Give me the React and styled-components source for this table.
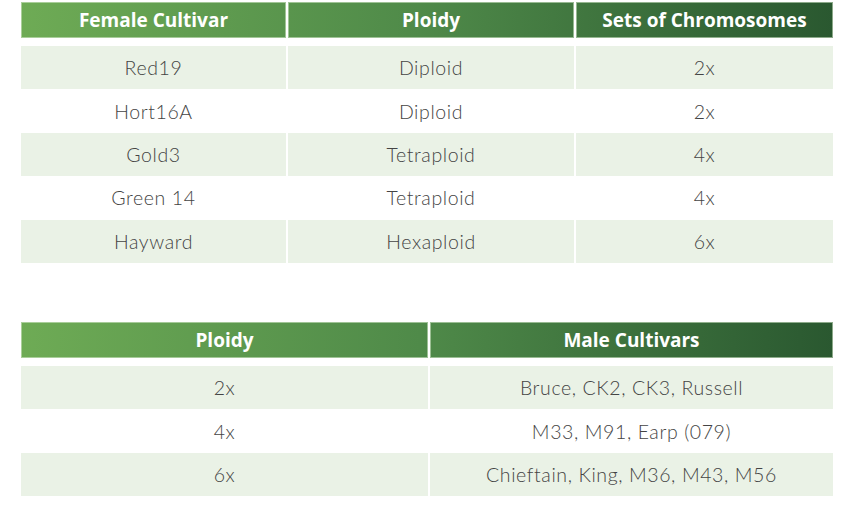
import React from "react";
import styled, { createGlobalStyle } from "styled-components";

const GlobalStyle = createGlobalStyle`
    body {
        margin: 0;
        background: #ffffff;
    }
`;

const Page = styled.div`
    padding: 2px 11px 0 21px;
    display: flex;
    flex-direction: column;
    gap: 59px;
`;

const Grid = styled.div`
    display: grid;
    grid-template-columns: ${(p) => p.$cols};
    column-gap: 2px;
    width: 812px;
`;

const HeadCell = styled.div`
    height: 36px;
    margin-bottom: 8px;
    display: flex;
    align-items: center;
    justify-content: center;
    box-sizing: border-box;
    border: 1px solid rgba(220, 236, 212, 0.55);
    background: linear-gradient(90deg, #6eab55 21px, #4f8a49 420px, #2a5830 833px);
    background-attachment: fixed;
    color: #ffffff;
    font-family: "Open Sans", "Liberation Sans", sans-serif;
    font-weight: 700;
    font-size: 19px;
`;

const Cell = styled.div`
    height: 43.4px;
    display: flex;
    align-items: center;
    justify-content: center;
    background: ${(p) => (p.$shade ? "#eaf2e6" : "#ffffff")};
    color: #444444;
    font-family: Lato, Inter, sans-serif;
    font-weight: 300;
    font-size: 19.5px;
    letter-spacing: 0.6px;
`;

const femaleRows = [
    ["Red19", "Diploid", "2x"],
    ["Hort16A", "Diploid", "2x"],
    ["Gold3", "Tetraploid", "4x"],
    ["Green 14", "Tetraploid", "4x"],
    ["Hayward", "Hexaploid", "6x"],
];

const maleRows = [
    ["2x", "Bruce, CK2, CK3, Russell"],
    ["4x", "M33, M91, Earp (079)"],
    ["6x", "Chieftain, King, M36, M43, M56"],
];

function DataTable({ cols, heads, rows }) {
    return (
        <Grid $cols={cols}>
            {heads.map((h) => (
                <HeadCell key={h}>{h}</HeadCell>
            ))}
            {rows.map((row, i) =>
                row.map((v, j) => (
                    <Cell key={i + "-" + j} $shade={i % 2 === 0}>
                        {v}
                    </Cell>
                ))
            )}
        </Grid>
    );
}

export default function App() {
    return (
        <>
            <GlobalStyle />
            <Page>
                <DataTable
                    cols="265px 286px 257px"
                    heads={["Female Cultivar", "Ploidy", "Sets of Chromosomes"]}
                    rows={femaleRows}
                />
                <DataTable
                    cols="407px 403px"
                    heads={["Ploidy", "Male Cultivars"]}
                    rows={maleRows}
                />
            </Page>
        </>
    );
}
